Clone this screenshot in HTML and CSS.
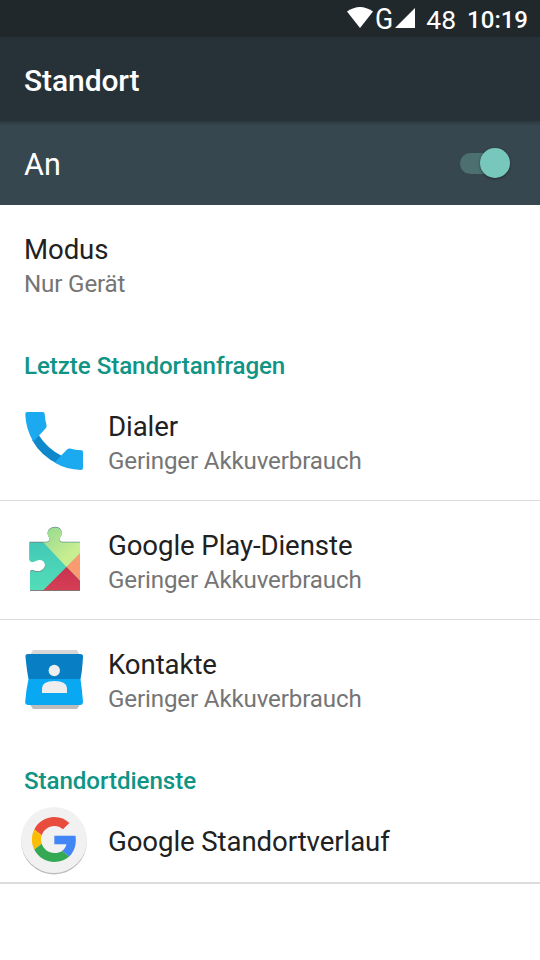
FILE: index.html
```html
<!DOCTYPE html>
<html lang="de">
<head>
    <meta charset="UTF-8">
    <meta name="viewport" content="width=device-width, initial-scale=1.0">
    <title>Standort</title>
    <link rel="stylesheet" href="styles.css">
</head>
<body>
    <div class="statusbar">
        <svg class="wifi" width="26" height="21" viewBox="0 0 26 21"><path d="M0 4.5Q13-4.5 26 4.5L13 21Z" fill="#fff"/></svg>
        <span class="network">G</span>
        <svg class="signal" width="20" height="20" viewBox="0 0 20 20"><path d="M20 0V20H0Z" fill="#fff"/></svg>
        <span class="battery">48</span>
        <span class="clock">10:19</span>
    </div>
    <header>Standort</header>
    <div class="switchbar">
        <span>An</span>
        <div class="switch"><div class="thumb"></div></div>
    </div>

    <main>
        <div class="row">
            <div class="text">
                <div class="title">Modus</div>
                <div class="summary">Nur Gerät</div>
            </div>
        </div>

        <h2>Letzte Standortanfragen</h2>
        <div class="row line">
            <svg class="icon" width="72" height="72" viewBox="0 0 72 72">
                <path d="M14 35L20 29Q29 43.500 44 51L40 59Q23 51 14 35Z" fill="#0f88cb"/>
                <path d="M9 7H24.500Q26.500 7 26.700 9Q27 15 28.500 20Q29 22 27.500 23.500L15.300 36.700Q7.500 23 7.300 9Q7.300 7 9 7Z" fill="#1ba9ef"/>
                <path d="M36.500 57.500L49 44.500Q50.500 43.300 52 43.500Q57 45 63.500 45.200Q65 45.400 65 47V63Q65 65 63 65Q48 64.500 36.500 57.500Z" fill="#1ba9ef"/>
            </svg>
            <div class="text">
                <div class="title">Dialer</div>
                <div class="summary">Geringer Akkuverbrauch</div>
            </div>
        </div>
        <div class="row line">
            <svg class="icon" width="72" height="72" viewBox="0 0 72 72">
                <defs>
                    <clipPath id="puzzle"><path id="piece" d="M11.500 18.500H28Q32 18.500 31.500 14.500Q28 9.500 31 6Q33 3.500 37 3.500Q41 3.500 43 6.500Q45 10.500 41.500 14.500Q41 18.500 45 18.500H62V66.500H12V49Q12 46.500 14 46.500Q18 48.500 22 47.800Q27 45.500 27 41.500Q27 36.500 22 36Q19 35.800 17 37.500Q11.500 39 11.500 36Z"/></clipPath>
                    <linearGradient id="teal" x1="0" y1="0" x2="0" y2="1"><stop offset="0" stop-color="#3cc1b8"/><stop offset="1" stop-color="#55dfb7"/></linearGradient>
                    <linearGradient id="lime" x1="0" y1="0" x2="1" y2="1"><stop offset="0" stop-color="#90d690"/><stop offset=".65" stop-color="#c8ee91"/></linearGradient>
                    <linearGradient id="red" x1="0" y1="0" x2="0" y2="1"><stop offset="0" stop-color="#c93050"/><stop offset="1" stop-color="#d84356"/></linearGradient>
                </defs>
                <use href="#piece" fill="#707b75" transform="translate(0 -.7)"/>
                <g clip-path="url(#puzzle)">
                    <path d="M8 0H72V72H8Z" fill="url(#teal)"/>
                    <path d="M23 16V0H72V20L48.500 43Z" fill="url(#lime)"/>
                    <path d="M48.500 43L72 19V67Z" fill="#f99a71"/>
                    <path d="M24 67.500L48.500 43L72 67V72H20Z" fill="url(#red)"/>
                </g>
                <path d="M12 66.500H62" stroke="#7b6665" stroke-width=".8"/>
            </svg>
            <div class="text">
                <div class="title">Google Play-Dienste</div>
                <div class="summary">Geringer Akkuverbrauch</div>
            </div>
        </div>
        <div class="row">
            <svg class="icon" width="72" height="72" viewBox="0 0 72 72">
                <path d="M15 7H59L63 14H11Z" fill="#d7d7d7"/>
                <path d="M11 60H63L59 66H15Z" fill="#bdbdbd"/>
                <path d="M10 11H62Q65.500 11 65 14Q64 30 62.500 36H10.500Q9 29 7.500 14Q7 11 10 11Z" fill="#087fc5"/>
                <path d="M10.500 36H62.500Q64 47 65 58.500Q65 62 62 62H10.500Q7 62 7.200 59Q8 47 10.500 36Z" fill="#08a8f2"/>
                <circle cx="36.300" cy="27.500" r="5.700" fill="#eee"/>
                <path d="M24 50V46Q24 38 36.500 38T49 46V50Z" fill="#eee"/>
            </svg>
            <div class="text">
                <div class="title">Kontakte</div>
                <div class="summary">Geringer Akkuverbrauch</div>
            </div>
        </div>

        <h2>Standortdienste</h2>
        <div class="row service">
            <svg class="icon" width="72" height="72" viewBox="0 0 72 72">
                <circle cx="36" cy="37.600" r="32.800" fill="#bdbdbd"/>
                <circle cx="36" cy="36" r="33" fill="#f1f1f1"/>
                <g transform="translate(13.900 13.100) scale(.935)">
                    <path fill="#e94b3c" d="M24 9.500c3.540 0 6.710 1.220 9.210 3.600l6.850-6.850C35.900 2.380 30.470 0 24 0 14.620 0 6.510 5.380 2.560 13.220l7.980 6.190C12.430 13.720 17.740 9.500 24 9.500z"/>
                    <path fill="#4285f4" d="M46.980 24.550c0-1.570-.15-3.090-.38-4.550H24v9.020h12.940c-.58 2.960-2.260 5.480-4.780 7.180l7.730 6c4.510-4.180 7.090-10.360 7.090-17.650z"/>
                    <path fill="#fbbc05" d="M10.530 28.590c-.48-1.450-.76-2.990-.76-4.590s.27-3.140.76-4.590l-7.980-6.190C.92 16.460 0 20.120 0 24c0 3.880.92 7.540 2.560 10.780l7.970-6.190z"/>
                    <path fill="#34a853" d="M24 48c6.480 0 11.930-2.130 15.890-5.810l-7.730-6c-2.150 1.450-4.920 2.300-8.160 2.300-6.260 0-11.570-4.220-13.470-9.910l-7.980 6.190C6.510 42.620 14.620 48 24 48z"/>
                </g>
            </svg>
            <div class="text">
                <div class="title">Google Standortverlauf</div>
            </div>
        </div>
    </main>
</body>
</html>
```

FILE: styles.css
```css
body {
    font-family: Roboto, sans-serif;
    margin: 0;
    padding: 0;
    background-color: #fff;
}
.statusbar {
    display: flex;
    justify-content: flex-end;
    box-sizing: border-box;
    height: 37px;
    padding: 0 12px 0 0;
    background: #20282b;
    color: #fff;
    line-height: 39px;
}
.wifi {
    margin-top: 7px;
}
.network {
    font-size: 29px;
    line-height: 38px;
    width: 22px;
    text-align: center;
    transform: scaleX(.92);
}
.signal {
    margin-top: 8px;
}
.battery {
    font-size: 26.5px;
    margin-left: 11px;
    margin-right: 11px;
}
.clock {
    font-size: 24px;
    font-weight: 500;
    line-height: 40px;
}
header {
    height: 84px;
    line-height: 88px;
    padding-left: 24px;
    background: #263238;
    color: #fff;
    font-size: 30px;
    font-weight: 500;
    letter-spacing: -0.1px;
}
.switchbar {
    display: flex;
    align-items: center;
    justify-content: space-between;
    box-sizing: border-box;
    height: 84px;
    padding: 0 30px 0 24px;
    background: linear-gradient(#2c393e, #37474f 5px);
    color: #fff;
    font-size: 30.5px;
    line-height: 84px;
}
.switchbar span {
    padding-top: 3px;
}
.switch {
    display: flex;
    justify-content: flex-end;
    align-items: center;
    width: 50px;
    height: 21px;
    border-radius: 11px;
    background: #4c706f;
}
.thumb {
    flex: none;
    width: 30px;
    height: 30px;
    border-radius: 50%;
    background: #78c7bc;
    box-shadow: 0 1px 3px rgba(0, 0, 0, 0.4);
}
.row {
    display: flex;
    box-sizing: border-box;
    height: 119px;
    padding: 0 24px;
}
.line {
    border-bottom: 1px solid #dcdcdc;
}
.icon {
    flex: none;
    margin: 23px 18px 0 -6px;
}
.text {
    padding-top: 27px;
}
.title {
    color: #212121;
    font-size: 27.6px;
    line-height: 36px;
    letter-spacing: -0.09px;
}
.summary {
    color: #757575;
    font-size: 24.15px;
    line-height: 32px;
    letter-spacing: -0.15px;
}
h2 {
    height: 58px;
    margin: 0;
    padding-left: 24px;
    color: #0f9485;
    font-size: 24.15px;
    font-weight: 500;
    line-height: 85px;
    letter-spacing: -0.07px;
}
.service {
    height: 87px;
    border-bottom: 2px solid #dcdcdc;
}
.service .icon {
    margin-top: 7px;
}
.service .text {
    padding-top: 27px;
}
```
